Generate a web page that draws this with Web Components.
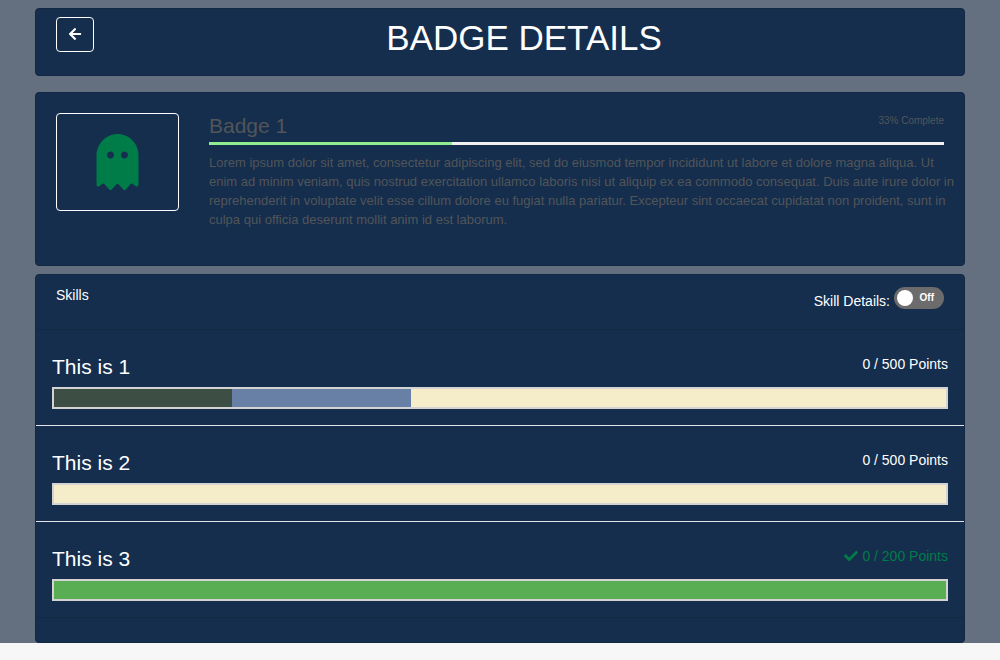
<!DOCTYPE html>
<html lang="en">
<head>
<meta charset="utf-8">
<meta name="viewport" content="width=device-width, initial-scale=1">
<title>Badge Details</title>
<style>
  body {
    margin: 0;
    background: #f7f7f7;
    color: #fff;
    font: 14px/21px "Liberation Sans", Arial, sans-serif;
    --card: #152e4d;
    --edge: #122843;
    --green: #007c49;
    --muted: #525558;
  }
</style>
</head>
<body>
<badge-page>
  <page-header>BADGE DETAILS</page-header>
  <badge-summary name="Badge 1" percent="33">Lorem ipsum dolor sit amet, consectetur adipiscing elit, sed do eiusmod tempor incididunt ut labore et dolore magna aliqua. Ut enim ad minim veniam, quis nostrud exercitation ullamco laboris nisi ut aliquip ex ea commodo consequat. Duis aute irure dolor in reprehenderit in voluptate velit esse cillum dolore eu fugiat nulla pariatur. Excepteur sint occaecat cupidatat non proident, sunt in culpa qui officia deserunt mollit anim id est laborum.</badge-summary>
  <skills-card>
    <skill-row name="This is 1" points="0 / 500 Points" today="20" earned="20"></skill-row>
    <skill-row name="This is 2" points="0 / 500 Points"></skill-row>
    <skill-row name="This is 3" points="0 / 200 Points" complete></skill-row>
  </skills-card>
</badge-page>

<script>
const define = (tag, markup, setup) => {
  const template = document.createElement('template');
  template.innerHTML = '<style>*, ::before, ::after { box-sizing: border-box; }</style>' + markup;
  customElements.define(tag, class extends HTMLElement {
    constructor() {
      super();
      this.attachShadow({ mode: 'open' }).append(template.content.cloneNode(true));
    }
    connectedCallback() {
      if (setup) setup(this, this.shadowRoot);
    }
  });
};

define('badge-page', `
  <style>
    :host { display: block; background: #646f7f; }
    main { display: flex; flex-direction: column; gap: 8px; padding: 8px 35px 0; }
  </style>
  <main><slot></slot></main>
`);

define('page-header', `
  <style>
    :host {
      display: flex; align-items: flex-start; gap: 10px;
      box-sizing: border-box; margin-bottom: 8px; padding: 8px 20px 16px;
      background: var(--card); border: 1px solid var(--edge); border-radius: 4px;
    }
    button {
      display: flex; align-items: center; padding: 9px 11px 10px;
      background: none; color: #fff; border: 1px solid #fff; border-radius: 4px; cursor: pointer;
    }
    svg { display: block; width: 14px; height: 14px; }
    h1 { flex: 1; margin: 0; font-size: 35px; line-height: 42px; font-weight: 400; text-align: center; }
  </style>
  <button type="button" aria-label="Back">
    <svg viewBox="0 0 448 512" fill="currentColor" aria-hidden="true"><path d="M257.5 445.1l-22.2 22.2c-9.4 9.4-24.6 9.4-33.9 0L7 273c-9.4-9.4-9.4-24.6 0-33.9L201.4 44.7c9.4-9.4 24.6-9.4 33.9 0l22.2 22.2c9.5 9.5 9.3 25-.4 34.3L136.6 216H424c13.3 0 24 10.7 24 24v32c0 13.3-10.7 24-24 24H136.6l120.5 114.8c9.8 9.3 10 24.8.4 34.3z"/></svg>
  </button>
  <h1><slot></slot></h1>
`);

define('badge-summary', `
  <style>
    :host {
      display: flex; align-items: flex-start; gap: 30px;
      box-sizing: border-box; padding: 20px 20px 36px;
      background: var(--card); border: 1px solid var(--edge); border-radius: 4px; color: var(--muted);
    }
    .icon {
      flex: none; display: flex; justify-content: center; padding: 20px 39px;
      border: 1px solid #fff; border-radius: 4px; color: var(--green);
    }
    .icon svg { display: block; width: 43px; height: 56px; }
    .body { flex: 1; min-width: 0; }
    .top { display: flex; justify-content: space-between; align-items: flex-start; }
    h2 { margin: 0; font-size: 21px; line-height: 25px; font-weight: 400; }
    .percent { font-size: 10px; line-height: 15px; }
    .bar { height: 3px; margin: 4px 0 8px; background: #f1f1f1; }
    .fill { height: 100%; background: #90ee90; }
    p { margin: 0 -12px 0 0; font-size: 13px; line-height: 19px; }
  </style>
  <div class="icon">
    <svg viewBox="0 0 384 512" fill="currentColor" aria-hidden="true"><path d="M186.1.09C81.01 3.24 0 94.92 0 200.05v263.92c0 14.26 17.23 21.39 27.31 11.31l24.92-18.53c6.66-4.95 16-3.99 21.51 2.21l42.95 48.35c6.25 6.25 16.38 6.25 22.63 0l40.72-45.85c6.37-7.17 17.56-7.17 23.92 0l40.72 45.85c6.25 6.25 16.38 6.25 22.63 0l42.95-48.35c5.51-6.2 14.85-7.17 21.51-2.21l24.92 18.53c10.08 10.08 27.31 2.94 27.31-11.31V192C384 84 294.83-3.17 186.1.09zM128 224c-17.67 0-32-14.33-32-32s14.33-32 32-32 32 14.33 32 32-14.33 32-32 32zm128 0c-17.67 0-32-14.33-32-32s14.33-32 32-32 32 14.33 32 32-14.33 32-32 32z"/></svg>
  </div>
  <div class="body">
    <div class="top"><h2></h2><span class="percent"></span></div>
    <div class="bar" role="progressbar" aria-label="Badge progress" aria-valuemin="0" aria-valuemax="100"><div class="fill"></div></div>
    <p><slot></slot></p>
  </div>
`, (host, root) => {
  const percent = host.getAttribute('percent');
  root.querySelector('h2').textContent = host.getAttribute('name');
  root.querySelector('.percent').textContent = percent + '% Complete';
  root.querySelector('.fill').style.width = percent + '%';
  root.querySelector('.bar').setAttribute('aria-valuenow', percent);
});

define('toggle-switch', `
  <style>
    :host { display: block; }
    label { display: flex; align-items: flex-start; gap: 4px; cursor: pointer; }
    .text { padding-top: 4px; }
    .switch { display: grid; align-items: center; }
    input {
      grid-area: 1 / 1; appearance: none; width: 50px; height: 22px; margin: 0; padding: 3px;
      border-radius: 11px; background: #6c6c6c; cursor: pointer;
    }
    input::before { content: ""; display: block; width: 16px; height: 16px; border-radius: 8px; background: #fff; }
    input:checked { background: var(--green); }
    input:checked::before { margin-left: auto; }
    .state { grid-area: 1 / 1; justify-self: end; padding-right: 10px; font-size: 10px; line-height: 22px; font-weight: 700; pointer-events: none; }
    input:checked + .state { justify-self: start; padding-left: 10px; }
  </style>
  <label>
    <span class="text"><slot></slot></span>
    <span class="switch"><input type="checkbox" role="switch"><span class="state">Off</span></span>
  </label>
`, (host, root) => {
  const input = root.querySelector('input');
  input.addEventListener('change', () => {
    root.querySelector('.state').textContent = input.checked ? 'On' : 'Off';
  });
});

define('skills-card', `
  <style>
    :host {
      display: block; box-sizing: border-box; padding-bottom: 24px;
      background: var(--card); border: 1px solid var(--edge); border-radius: 4px;
    }
    header {
      display: flex; justify-content: space-between; align-items: flex-start;
      padding: 12px 20px 17px; border-bottom: 1px solid var(--edge);
    }
    h2 { margin: 0; font-size: 14px; line-height: 16px; font-weight: 400; }
  </style>
  <header><h2>Skills</h2><toggle-switch>Skill Details:</toggle-switch></header>
  <slot></slot>
`);

define('skill-row', `
  <style>
    :host { display: block; padding: 24px 16px 16px; border-bottom: 1px solid #e2e6ea; }
    :host(:last-of-type) { border-color: var(--edge); }
    .top { display: flex; justify-content: space-between; align-items: flex-start; margin-bottom: 8px; }
    h3 { margin: 0; font-size: 21px; line-height: 25px; font-weight: 400; }
    .points { display: flex; align-items: flex-start; gap: 4px; }
    svg { display: none; width: 14px; height: 14px; margin-top: 3px; }
    .bar { display: flex; box-sizing: border-box; height: 22px; border: 2px solid #d3d3d3; background: #f5edc9; }
    .today { background: #3d4e44; }
    .earned { background: #687fa6; }
    :host([complete]) .points { color: var(--green); }
    :host([complete]) svg { display: block; }
    :host([complete]) .bar { background: #59ad52; }
  </style>
  <div class="top">
    <h3></h3>
    <span class="points">
      <svg viewBox="0 0 512 512" fill="currentColor" aria-hidden="true"><path d="M173.898 439.404l-166.4-166.4c-9.997-9.997-9.997-26.206 0-36.204l36.203-36.204c9.997-9.998 26.207-9.998 36.204 0L192 312.69 432.095 72.596c9.997-9.997 26.207-9.997 36.204 0l36.203 36.204c9.997 9.997 9.997 26.206 0 36.204l-294.4 294.401c-9.998 9.997-26.207 9.997-36.204-.001z"/></svg>
      <span class="count"></span>
    </span>
  </div>
  <div class="bar" role="progressbar" aria-valuemin="0" aria-valuemax="100"><div class="today"></div><div class="earned"></div></div>
`, (host, root) => {
  const name = host.getAttribute('name');
  const today = Number(host.getAttribute('today'));
  const earned = Number(host.getAttribute('earned'));
  const bar = root.querySelector('.bar');
  root.querySelector('h3').textContent = name;
  root.querySelector('.count').textContent = host.getAttribute('points');
  root.querySelector('.today').style.width = today + '%';
  root.querySelector('.earned').style.width = earned + '%';
  bar.setAttribute('aria-label', name);
  bar.setAttribute('aria-valuenow', host.hasAttribute('complete') ? 100 : today + earned);
});
</script>
</body>
</html>
